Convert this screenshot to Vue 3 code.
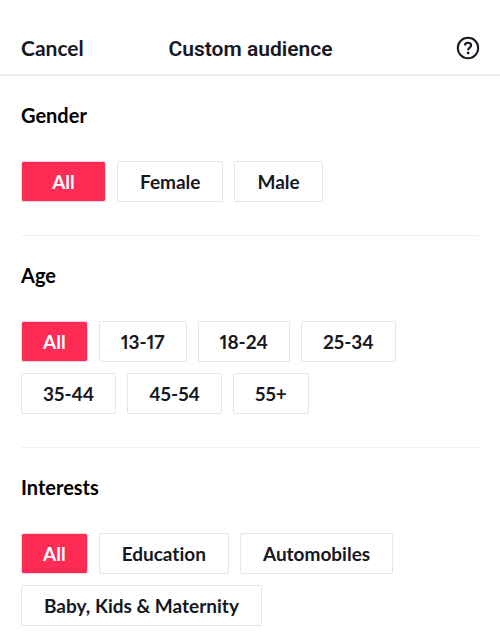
<script setup>
import { ref } from 'vue'

const sections = ref([
  { title: 'Gender', wide: true, selected: 'All', options: ['All', 'Female', 'Male'] },
  { title: 'Age', dense: true, selected: 'All', options: ['All', '13-17', '18-24', '25-34', '35-44', '45-54', '55+'] },
  { title: 'Interests', selected: 'All', options: ['All', 'Education', 'Automobiles', 'Baby, Kids & Maternity'] },
])
</script>

<template>
  <div class="page">
    <header class="bar">
      <button class="cancel" type="button">Cancel</button>
      <h1>Custom audience</h1>
      <button class="help" type="button" aria-label="Help">
        <svg viewBox="0 0 24 24" width="24" height="24" fill="none" stroke="#161823">
          <circle cx="12" cy="12" r="10.2" stroke-width="2" />
          <path d="M8.9 9.6C8.9 7.7 10.1 6.7 12 6.7s3.1 1 3.1 2.7c0 2.1-3 2.4-3 4.9" stroke-width="2.1" />
          <circle cx="12.1" cy="17" r="1.4" fill="#161823" stroke="none" />
        </svg>
      </button>
    </header>
    <main>
      <section v-for="s in sections" :key="s.title" :class="{ wide: s.wide, dense: s.dense }">
        <h2>{{ s.title }}</h2>
        <div class="chips">
          <button
            v-for="o in s.options"
            :key="o"
            type="button"
            class="chip"
            :class="{ active: s.selected === o }"
            :aria-pressed="s.selected === o"
            @click="s.selected = o"
          >{{ o }}</button>
        </div>
      </section>
    </main>
  </div>
</template>

<style>
body {
  margin: 0;
  background: #fff;
}
</style>

<style scoped>
.page {
  font-family: Lato, "Liberation Sans", sans-serif;
  color: #161823;
}
button {
  font: inherit;
  color: inherit;
  background: none;
  border: 0;
  padding: 0;
  cursor: pointer;
}
.bar {
  display: grid;
  grid-template-columns: 1fr auto 1fr;
  align-items: center;
  padding: 35px 20px 13px 21px;
  border-bottom: 2px solid #efefef;
}
.cancel {
  justify-self: start;
  font-size: 21px;
  line-height: 24px;
  font-weight: 700;
}
h1 {
  margin: 2px 0 0;
  font-family: Roboto, sans-serif;
  font-size: 21px;
  line-height: 24px;
  font-weight: 600;
}
.help {
  justify-self: end;
  height: 24px;
}
main {
  padding: 0 22px 0 21px;
}
section {
  padding: 27px 0 33px;
}
section + section {
  border-top: 1px solid #efefef;
}
h2 {
  margin: 0 0 34px;
  font-size: 20px;
  line-height: 24px;
  font-weight: 700;
  color: #000;
}
.chips {
  display: flex;
  flex-wrap: wrap;
  gap: 11px;
}
.chip {
  height: 41px;
  padding: 0 22px;
  border: 1px solid #e6e6e6;
  border-radius: 2px;
  font-size: 19px;
  line-height: 24px;
  font-weight: 700;
  font-variant-numeric: proportional-nums;
  font-variant-ligatures: none;
}
.chip.active,
.dense .chip {
  padding: 0 21px;
}
.chip.active {
  background: #fe2c55;
  background-clip: padding-box;
  border-color: #ffd3dc;
  color: #fff;
}
.wide .chip:first-child {
  min-width: 85px;
}
</style>
